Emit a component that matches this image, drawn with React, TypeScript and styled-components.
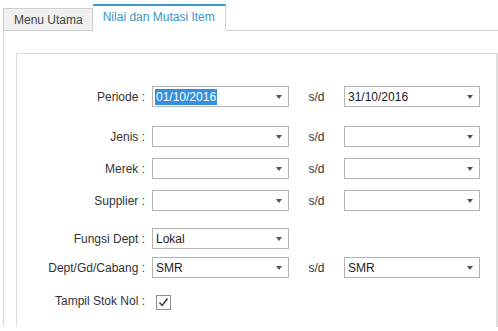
import styled, { createGlobalStyle } from 'styled-components';

const GlobalStyle = createGlobalStyle`
    html, body {
        margin: 0;
        padding: 0;
        background: #ffffff;
    }
    body {
        font-family: 'Liberation Sans', Arial, sans-serif;
        font-size: 12px;
        color: #333333;
    }
`;

const Window = styled.div`
    width: 498px;
    height: 331px;
    overflow: hidden;
    padding: 3px 0 0 3px;
    box-sizing: border-box;
`;

const TabStrip = styled.div`
    display: flex;
    align-items: flex-end;
    height: 27px;
`;

const Tab = styled.div<{ active?: boolean }>`
    box-sizing: border-box;
    display: flex;
    align-items: center;
    justify-content: center;
    height: ${({ active }) => (active ? '27px' : '22px')};
    padding: ${({ active }) => (active ? '0 10px 2px 10px' : '0 9px 0 10px')};
    background: ${({ active }) => (active ? '#ffffff' : '#f0f0f0')};
    border: 1px solid #cfcfcf;
    border-top: ${({ active }) => (active ? '2px solid #3c9bd0' : '1px solid #cfcfcf')};
    border-bottom: ${({ active }) => (active ? '1px solid #ffffff' : 'none')};
    border-left: ${({ active }) => (active ? 'none' : '1px solid #cfcfcf')};
    color: ${({ active }) => (active ? '#3a95c4' : '#444444')};
    margin-bottom: ${({ active }) => (active ? '-1px' : '0')};
    position: relative;
    z-index: ${({ active }) => (active ? 1 : 0)};
`;

const Panel = styled.div`
    border-top: 1px solid #cfcfcf;
    border-left: 1px solid #d6d6d6;
    height: 296px;
    padding: 22px 0 0 12px;
    box-sizing: border-box;
`;

const GroupBox = styled.div`
    border: 1px solid #dedede;
    border-right: 2px solid #dedede;
    border-bottom: none;
    height: 274px;
    padding-top: 32px;
    box-sizing: border-box;
`;

const Row = styled.div<{ gap: number }>`
    display: grid;
    grid-template-columns: 135px 137px 55px 136px;
    align-items: center;
    height: 21px;
    margin-top: ${({ gap }) => gap}px;
`;

const Label = styled.span`
    text-align: right;
    padding-right: 7px;
    white-space: nowrap;
`;

const Sd = styled.span`
    text-align: center;
    color: #333333;
`;

const Combo = styled.div`
    box-sizing: border-box;
    height: 21px;
    border: 1px solid #b4b4b4;
    background: #ffffff;
    display: flex;
    align-items: center;
    padding: 0 6px 0 2px;
    color: #222222;
`;

const ComboText = styled.span<{ selected?: boolean }>`
    flex: 1;
    display: flex;
    white-space: nowrap;
    & > span {
        padding: 1px 1px;
        background: ${({ selected }) => (selected ? '#3390e0' : 'transparent')};
        color: ${({ selected }) => (selected ? '#ffffff' : '#222222')};
    }
`;

const Arrow = styled.span`
    width: 0;
    height: 0;
    border-left: 3.5px solid transparent;
    border-right: 3.5px solid transparent;
    border-top: 4px solid #555555;
`;

const CheckBox = styled.span`
    box-sizing: border-box;
    width: 15px;
    height: 15px;
    margin-left: 4px;
    margin-top: 3px;
    border: 1px solid #8f8f8f;
    background: #fdfdfd;
    display: flex;
    align-items: center;
    justify-content: center;
`;

function Dropdown({ value, selected }: { value?: string; selected?: boolean }) {
    return (
        <Combo>
            <ComboText selected={selected}>{value && <span>{value}</span>}</ComboText>
            <Arrow />
        </Combo>
    );
}

const rows = [
    { label: 'Periode :', from: '01/10/2016', to: '31/10/2016', gap: 0, selected: true },
    { label: 'Jenis :', from: '', to: '', gap: 19 },
    { label: 'Merek :', from: '', to: '', gap: 11 },
    { label: 'Supplier :', from: '', to: '', gap: 11 },
];

export default function App() {
    return (
        <Window>
            <GlobalStyle />
            <TabStrip>
                <Tab>Menu Utama</Tab>
                <Tab active>Nilai dan Mutasi Item</Tab>
            </TabStrip>
            <Panel>
                <GroupBox>
                    {rows.map((r) => (
                        <Row key={r.label} gap={r.gap}>
                            <Label>{r.label}</Label>
                            <Dropdown value={r.from} selected={r.selected} />
                            <Sd>s/d</Sd>
                            <Dropdown value={r.to} />
                        </Row>
                    ))}
                    <Row gap={17}>
                        <Label>Fungsi Dept :</Label>
                        <Dropdown value="Lokal" />
                    </Row>
                    <Row gap={8}>
                        <Label>Dept/Gd/Cabang :</Label>
                        <Dropdown value="SMR" />
                        <Sd>s/d</Sd>
                        <Dropdown value="SMR" />
                    </Row>
                    <Row gap={12}>
                        <Label>Tampil Stok Nol :</Label>
                        <CheckBox>
                            <svg width="11" height="11" viewBox="0 0 11 11">
                                <path d="M1.5 5.5 L4.2 8.5 L9.5 1.5" fill="none" stroke="#333" strokeWidth="1.4" />
                            </svg>
                        </CheckBox>
                    </Row>
                </GroupBox>
            </Panel>
        </Window>
    );
}
